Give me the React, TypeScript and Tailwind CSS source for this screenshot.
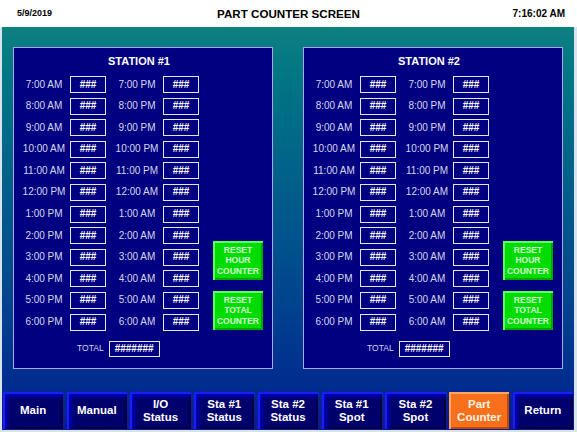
import React from "react";

const leftTimes = ["7:00 AM","8:00 AM","9:00 AM","10:00 AM","11:00 AM","12:00 PM","1:00 PM","2:00 PM","3:00 PM","4:00 PM","5:00 PM","6:00 PM"];
const rightTimes = ["7:00 PM","8:00 PM","9:00 PM","10:00 PM","11:00 PM","12:00 AM","1:00 AM","2:00 AM","3:00 AM","4:00 AM","5:00 AM","6:00 AM"];

function ValBox({ text, w = "w-[36px]", h = "h-[17px]" }: { text: string; w?: string; h?: string }) {
  return (
    <div className={`${w} ${h} border border-[#e4e4f4] flex items-center justify-center text-white font-bold text-[10px] leading-none`}>
      {text}
    </div>
  );
}

function ResetBtn({ word }: { word: string }) {
  return (
    <div className="w-[50px] h-[39px] bg-[#00dc00] shadow-[inset_2px_2px_0_#5cff5c,inset_-2px_-2px_0_#00a800] flex flex-col items-center justify-center text-[#d4ffd4] font-bold text-[8.5px] leading-[10.5px] text-center">
      <span>RESET</span>
      <span>{word}</span>
      <span>COUNTER</span>
    </div>
  );
}

function Panel({ n }: { n: number }) {
  return (
    <div className="w-[260px] h-[322px] bg-[#000080] border border-[#a8a8e6] flex flex-col">
      <div className="pt-[6px] pr-[8px] h-[21px] text-center text-white font-bold text-[11px] leading-[15px]">
        STATION #{n}
      </div>
      <div className="flex mt-[7px] pl-[6px]">
        <div className="flex flex-col gap-[4.6px]">
          {leftTimes.map((t, i) => (
            <div key={t} className="flex items-center">
              <div className="w-[48px] text-center text-[#d6d8ec] text-[10px] leading-none">{t}</div>
              <div className="ml-[2px]"><ValBox text="###" /></div>
              <div className="ml-[7px] w-[48px] text-center text-[#d6d8ec] text-[10px] leading-none">{rightTimes[i]}</div>
              <div className="ml-[2px]"><ValBox text="###" /></div>
            </div>
          ))}
        </div>
        <div className="ml-[14px] pt-[165px] flex flex-col gap-[11px]">
          <ResetBtn word="HOUR" />
          <ResetBtn word="TOTAL" />
        </div>
      </div>
      <div className="flex items-center mt-[10px] pl-[63px] gap-[5px]">
        <span className="text-[#d6d8ec] text-[8.5px] leading-none">TOTAL</span>
        <ValBox text="#######" w="w-[51px]" h="h-[16px]" />
      </div>
    </div>
  );
}

const navItems: { label: string[]; active?: boolean }[] = [
  { label: ["Main"] },
  { label: ["Manual"] },
  { label: ["I/O", "Status"] },
  { label: ["Sta #1", "Status"] },
  { label: ["Sta #2", "Status"] },
  { label: ["Sta #1", "Spot"] },
  { label: ["Sta #2", "Spot"] },
  { label: ["Part", "Counter"], active: true },
  { label: ["Return"] },
];

export default function App() {
  return (
    <div
      className="w-[577px] h-[432px] bg-[#d9e3ee] flex flex-col overflow-hidden"
      style={{ fontFamily: '"Liberation Sans", Arial, sans-serif' }}
    >
      <header className="h-[27px] bg-white flex items-center relative shrink-0">
        <span className="absolute left-[17px] text-[9px] font-bold text-black">5/9/2019</span>
        <span className="w-full text-center text-[11.6px] font-bold text-black">PART COUNTER SCREEN</span>
        <span className="absolute right-[12px] text-[10px] font-bold text-black">7:16:02 AM</span>
      </header>
      <main className="ml-[2px] mr-[3px] flex-1 bg-gradient-to-b from-[#0f8081] to-[#0a1a90] flex flex-col">
        <div className="flex pt-[20px] pl-[11px] gap-[30px]">
          <Panel n={1} />
          <Panel n={2} />
        </div>
        <nav className="mt-auto mb-[1px] grid grid-cols-9 gap-[3.5px] px-[1px] h-[37px]">
          {navItems.map((it) => (
            <div
              key={it.label.join(" ")}
              className={
                it.active
                  ? "flex flex-col items-center justify-center text-center font-bold text-[11.5px] leading-[13px] text-[#fff0e4] bg-[#f8701c] shadow-[inset_2px_2px_0_#ffa566,inset_-2px_-2px_0_#c04800]"
                  : "flex flex-col items-center justify-center text-center font-bold text-[11.5px] leading-[13px] text-white bg-[#00006c] shadow-[inset_2px_2px_0_#1c1cff,inset_4px_4px_4px_#0000c8,inset_-2px_-2px_0_#00003c]"
              }
            >
              {it.label.map((l) => (
                <span key={l}>{l}</span>
              ))}
            </div>
          ))}
        </nav>
      </main>
      <div className="h-[2px] shrink-0" />
    </div>
  );
}
